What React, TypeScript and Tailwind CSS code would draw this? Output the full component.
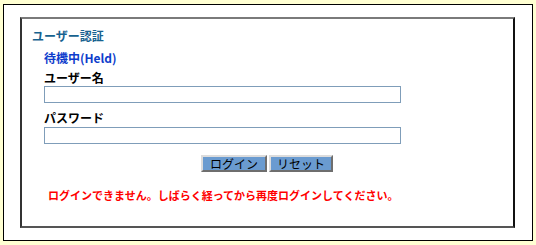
export default function App() {
  const jp = { fontFamily: '"Noto Sans CJK JP", "Noto Sans", sans-serif' };
  return (
    <div className="h-[245px] w-[536px] bg-[#ffffd2] pl-[3px] pt-[4px]" style={jp}>
      <div className="h-[237px] w-[530px] border border-black bg-white pl-[16px] pr-[17px] pt-[12px]">
        <div className="h-[211px] border-2 border-b-[#555] border-l-[#333] border-r-[#111] border-t-[#7a7a7a] pl-[10px] pt-[9px]">
          <div className="text-[12px] font-bold leading-[16px] text-[#17628f]">ユーザー認証</div>
          <div className="pl-[12px]">
            <div className="mt-[6px] text-[12px] font-bold leading-[16px] text-[#0d3ccc]">待機中(Held)</div>
            <label className="mt-[5px] block text-[12px] font-bold leading-[14px] text-black">ユーザー名</label>
            <input type="text" className="mt-[1px] block h-[17px] w-[357px] border border-[#7f9db9] bg-white outline-none" />
            <label className="mt-[8px] block text-[12px] font-bold leading-[14px] text-black">パスワード</label>
            <input type="password" className="mt-[2px] block h-[17px] w-[357px] border border-[#7f9db9] bg-white outline-none" />
            <div className="mt-[11px] flex gap-[2px] pl-[157px]">
              <button className="h-[17px] w-[66px] border-2 border-b-[#6e6e6e] border-l-[#dcdcdc] border-r-[#6e6e6e] border-t-[#dcdcdc] bg-[#6a9bd0] text-[12px] leading-[12px] text-black">ログイン</button>
              <button className="h-[17px] w-[64px] border-2 border-b-[#6e6e6e] border-l-[#dcdcdc] border-r-[#6e6e6e] border-t-[#dcdcdc] bg-[#6a9bd0] text-[12px] leading-[12px] text-black">リセット</button>
            </div>
            <p className="mt-[16px] pl-[4px] text-[11px] font-bold leading-[14px] text-[#ff0000]">
              ログインできません。しばらく経ってから再度ログインしてください。
            </p>
          </div>
        </div>
      </div>
    </div>
  );
}
